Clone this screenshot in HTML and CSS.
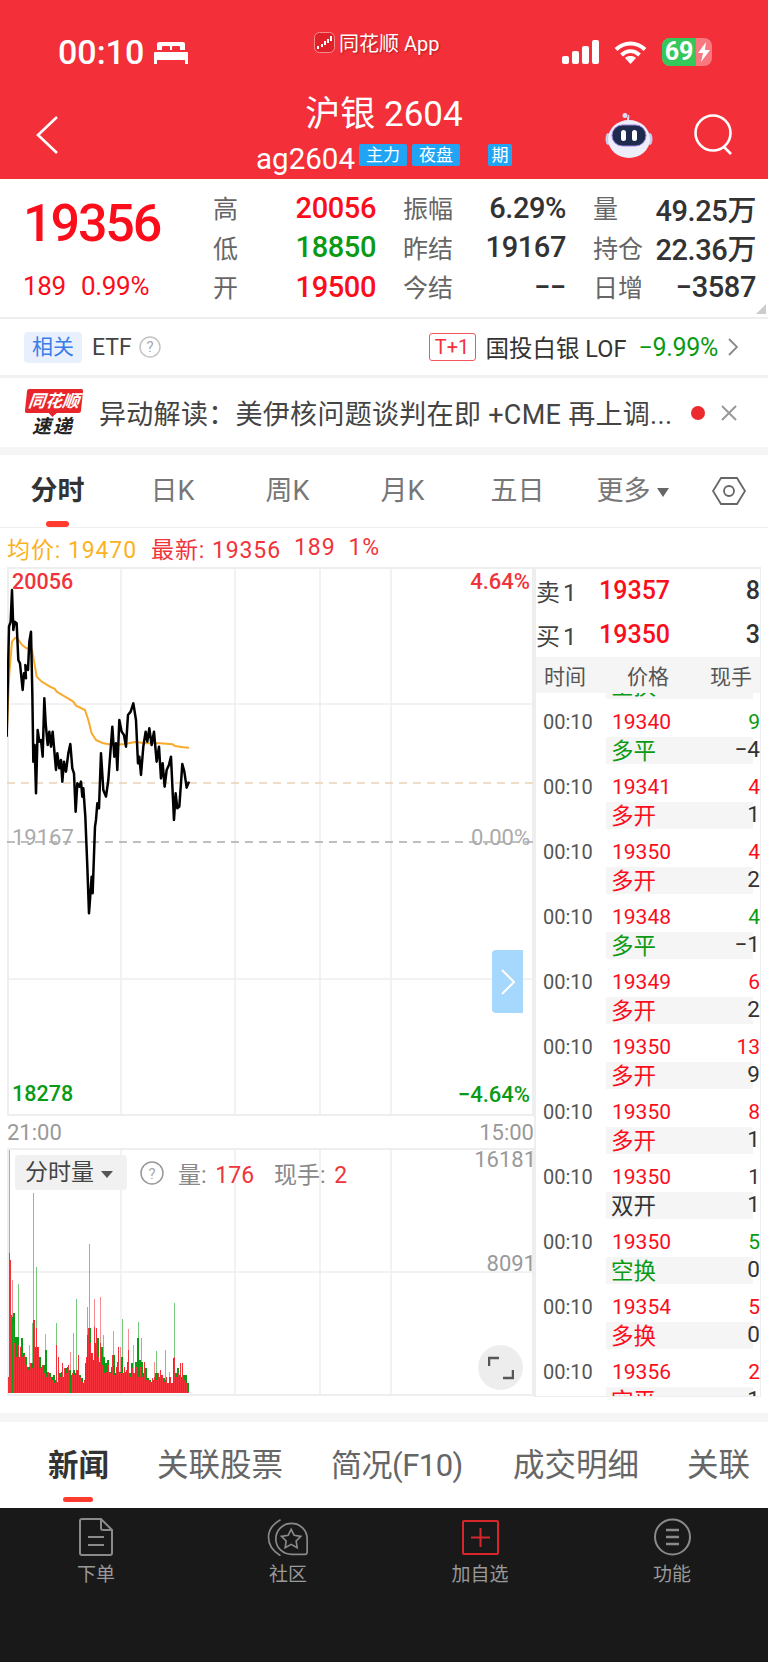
FILE: index.html
```html
<!DOCTYPE html>
<html lang="zh-CN">
<head>
    <meta charset="UTF-8">
    <meta name="viewport" content="width=device-width, initial-scale=1.0">
    <title>沪银2604</title>
    <link rel="stylesheet" href="styles.css">
</head>
<body>
    <!-- 顶部红色区域 -->
    <div class="header">
        <div class="status">
            <div class="status-left">
                <span class="clock">00:10</span>
                <svg width="34" height="23" viewBox="0 0 34 23"><path fill="#fff" d="M5 1h24a2 2 0 0 1 2 2v6h-5V6a1 1 0 0 0-1-1h-6a1 1 0 0 0-1 1v3h-2V6a1 1 0 0 0-1-1H9a1 1 0 0 0-1 1v3H3V3a2 2 0 0 1 2-2zM1 11h32a1 1 0 0 1 1 1v11h-3v-4H3v4H0V12a1 1 0 0 1 1-1z"/></svg>
            </div>
            <div class="status-app">
                <svg width="21" height="21" viewBox="0 0 21 21"><rect x=".5" y=".5" width="20" height="20" rx="5" fill="#e0212a" stroke="#f58a8e"/><path fill="#fff" d="M3 14h2v3H3zM7 12h2v3H7zM10 9h2v4h-2zM13 7h2v4h-2zM16 4h2v5h-2z"/></svg>
                <span>同花顺 App</span>
            </div>
            <div class="status-right">
                <svg width="37" height="24" viewBox="0 0 37 24" fill="#fff"><rect y="16" width="7" height="8" rx="2"/><rect x="10" y="11" width="7" height="13" rx="2"/><rect x="20" y="6" width="7" height="18" rx="2"/><rect x="30" width="7" height="24" rx="2"/></svg>
                <svg width="33" height="24" viewBox="0 0 33 24"><path fill="none" stroke="#fff" stroke-width="4" d="M2 9.5c8.500-8 20.500-8 29 0M7.500 15c5.500-5 12.500-5 18 0"/><path fill="#fff" d="M16.500 24l-5.500-6c3-2.600 8-2.600 11 0z"/></svg>
                <div class="battery">
                    <span class="battery-num">69</span>
                    <svg width="12" height="20" viewBox="0 0 12 20"><path fill="#fff" d="M8 0L0 11h5l-2 9 9-12H7z"/></svg>
                </div>
            </div>
        </div>
        <div class="nav">
            <svg class="back" width="24" height="40" viewBox="0 0 24 40"><path fill="none" stroke="#fff" stroke-width="2.600" d="M22 2L3 20l19 18"/></svg>
            <div class="title-box">
                <div class="title">沪银 2604</div>
                <div class="sub">
                    <span class="code">ag2604</span>
                    <span class="badge">主力</span>
                    <span class="badge">夜盘</span>
                    <span class="badge badge-qi">期</span>
                </div>
            </div>
            <div class="nav-right">
                <svg width="48" height="46" viewBox="0 0 48 46">
                    <path fill="none" stroke="#dcdcf5" stroke-width="2" d="M23 8c0-3 1-4 0-4"/>
                    <circle cx="20" cy="3.500" r="2.500" fill="#dcdcf5"/>
                    <ellipse cx="3" cy="27" rx="2.500" ry="6" fill="#c9cbec"/>
                    <ellipse cx="45" cy="27" rx="2.500" ry="6" fill="#c9cbec"/>
                    <ellipse cx="24" cy="27" rx="21" ry="19" fill="#eceefa"/>
                    <rect x="7" y="13" width="34" height="21" rx="10.500" fill="#1f2b4d" stroke="#9a7fe0"/>
                    <rect x="16" y="18" width="5" height="11" rx="2.500" fill="#fff"/>
                    <rect x="27" y="18" width="5" height="11" rx="2.500" fill="#fff"/>
                </svg>
                <svg class="search" width="40" height="42" viewBox="0 0 40 42"><circle cx="19" cy="19" r="17.500" fill="none" stroke="#fff" stroke-width="2.600"/><path stroke="#fff" stroke-width="2.600" d="M30 33l7 7"/></svg>
            </div>
        </div>
    </div>

    <!-- 行情 -->
    <div class="quote">
        <div class="quote-left">
            <div class="price">19356</div>
            <div class="change"><span>189</span><span>0.99%</span></div>
        </div>
        <div class="quote-grid">
            <div class="cell"><span class="lab">高</span><span class="num red">20056</span></div>
            <div class="cell"><span class="lab">振幅</span><span class="num">6.29%</span></div>
            <div class="cell"><span class="lab">量</span><span class="num">49.25万</span></div>
            <div class="cell"><span class="lab">低</span><span class="num green">18850</span></div>
            <div class="cell"><span class="lab">昨结</span><span class="num">19167</span></div>
            <div class="cell"><span class="lab">持仓</span><span class="num">22.36万</span></div>
            <div class="cell"><span class="lab">开</span><span class="num red">19500</span></div>
            <div class="cell"><span class="lab">今结</span><span class="num">−−</span></div>
            <div class="cell"><span class="lab">日增</span><span class="num">−3587</span></div>
        </div>
        <span class="corner"></span>
    </div>

    <!-- 相关ETF -->
    <div class="related">
        <span class="rel-tag">相关</span>
        <span class="rel-etf">ETF</span>
        <svg width="22" height="22" viewBox="0 0 22 22"><circle cx="11" cy="11" r="10" fill="none" stroke="#c4c4c4" stroke-width="1.500"/><text x="11" y="16" text-anchor="middle" class="help-q">?</text></svg>
        <span class="rel-t1">T+1</span>
        <span class="rel-name">国投白银 LOF</span>
        <span class="rel-pct">−9.99%</span>
        <svg width="10" height="18" viewBox="0 0 10 18"><path fill="none" stroke="#888" stroke-width="1.800" d="M1 1l8 8-8 8"/></svg>
    </div>

    <!-- 异动 -->
    <div class="news">
        <div class="news-logo">
            <div class="logo-red">同花顺</div>
            <div class="logo-black">速递</div>
        </div>
        <div class="news-text">异动解读：美伊核问题谈判在即 +CME 再上调...</div>
        <span class="news-dot"></span>
        <svg width="16" height="16" viewBox="0 0 16 16"><path stroke="#999" stroke-width="2" d="M1 1l14 14M15 1L1 15"/></svg>
    </div>

    <!-- K线切换 -->
    <div class="tabs">
        <div class="tab on">分时</div>
        <div class="tab">日K</div>
        <div class="tab">周K</div>
        <div class="tab">月K</div>
        <div class="tab">五日</div>
        <div class="tab">更多<i class="tri"></i></div>
        <svg width="34" height="30" viewBox="0 0 34 30"><path fill="none" stroke="#666" stroke-width="1.800" d="M9 2h16l8 13-8 13H9L1 15z"/><circle cx="17" cy="15" r="5" fill="none" stroke="#666" stroke-width="1.800"/></svg>
    </div>

    <div class="legend">
        <span class="orange">均价: 19470</span>
        <span class="legend-new">最新: 19356</span>
        <span class="legend-chg">189</span>
        <span class="legend-chg">1%</span>
    </div>

    <div class="main">
        <div class="left">
            <div class="chart">
                <svg width="527" height="549" viewBox="0 0 527 549">
                    <rect x="1" y="1" width="525" height="547" fill="none" stroke="#eee" stroke-width="2"/>
                    <path stroke="#eee" stroke-width="1.500" d="M114 0V549M228 0V549M313 0V549M384 0V549M0 137H527M0 412H527"/>
                    <path stroke="#e8d3b3" stroke-width="1.500" stroke-dasharray="8 6" d="M0 216H527"/>
                    <path stroke="#aaa" stroke-width="1.500" stroke-dasharray="8 6" d="M0 275H527"/>
                    <g transform="translate(-7,-7) scale(.3333)" fill="none" stroke-linejoin="round">
                        <polyline stroke="#f9a92b" stroke-width="6" points="20,530 28,340 36,245 46,233 56,240 66,255 80,265 96,270 105,320 110,350 125,365 150,380 165,387 170,395 195,410 220,425 228,437 255,450 265,480 275,520 288,540 310,550 340,555 375,552 405,546 440,550 480,550 518,553 525,558 550,562 567,563"/>
                        <polyline stroke="#000" stroke-width="7.500" points="20,530 27,200 32,185 36,90 40,210 44,185 50,190 55,300 60,310 68,390 72,340 78,355 76,315 84,330 88,245 93,215 97,400 100,605 104,555 108,700 113,510 118,545 123,540 128,590 133,415 137,490 143,555 148,515 153,560 158,515 168,630 172,580 178,625 183,600 187,665 192,605 198,635 205,580 211,552 217,625 222,640 227,755 232,670 238,680 243,665 247,710 250,685 256,770 262,920 267,1060 275,950 278,1000 285,800 288,780 292,730 297,745 303,580 310,690 318,710 325,660 337,500 343,590 348,550 352,630 358,480 365,515 372,525 378,560 384,465 392,455 400,430 408,480 414,610 418,590 423,645 430,560 437,515 442,545 448,505 455,555 462,515 470,605 477,560 483,655 488,610 494,680 500,630 507,615 513,590 522,780 527,700 532,745 538,740 547,612 553,635 560,683 567,665"/>
                    </g>
                </svg>
                <span class="chart-lab lab-high">20056</span>
                <span class="chart-lab lab-hpct">4.64%</span>
                <span class="chart-lab lab-mid">19167</span>
                <span class="chart-lab lab-mpct">0.00%</span>
                <span class="chart-lab lab-low">18278</span>
                <span class="chart-lab lab-lpct">−4.64%</span>
                <div class="side-btn">
                    <svg width="14" height="26" viewBox="0 0 14 26"><path fill="none" stroke="#fff" stroke-width="2" d="M1 1l12 12L1 25"/></svg>
                </div>
            </div>
            <div class="times"><span>21:00</span><span>15:00</span></div>
            <div class="vol">
                <svg width="527" height="249" viewBox="0 0 527 249">
                    <rect x="1" y="1" width="525" height="246" fill="none" stroke="#eee" stroke-width="2"/>
                    <path stroke="#eee" stroke-width="1.500" d="M114 0V248M228 0V248M313 0V248M384 0V248M0 124H527"/>
                    <g transform="translate(-7,-58) scale(.3333)" fill="none" stroke-width="3" shape-rendering="crispEdges">
                        <path stroke="#0a9a14" stroke-opacity=".55" d="M56 583V908M102 308V908M110 530V908M98 700V908M170 700V908M222 730V908M230 627V908M264 650V908M270 462V908M312 735V908M368 687V908M416 695V908M425 743V908M471 783V908M497 780V908M525 640V908"/>
                        <path stroke="#f4303a" stroke-opacity=".55" d="M28 180V908M39 570V908M90 765V908M136 733V908M212 785V908M285 628V908M303 622V908M340 722V908M361 770V908M386 717V908M401 765V908M465 815V908M510 845V908"/>
                        <path stroke="#0a9a14" stroke-width="4" d="M36 680V908M42 670V908M48 740V908M54 740V908M60 800V908M66 745V908M72 790V908M78 800V908M84 830V908M90 830V908M96 820V908M102 690V908M108 770V908M114 770V908M120 800V908M126 830V908M132 825V908M138 780V908M144 845V908M150 850V908M156 860V908M162 855V908M168 870V908M174 875V908M180 850V908M186 845V908M192 860V908M198 835V908M204 830V908M210 840V908M216 855V908M222 840V908M228 850V908M234 840V908M240 855V908M246 865V908M252 880V908M258 820V908M264 735V908M270 715V908M276 790V908M282 810V908M288 760V908M294 745V908M300 815V908M306 770V908M312 800V908M318 820V908M324 810V908M330 845V908M336 830V908M342 795V908M348 850V908M354 815V908M360 845V908M366 800V908M372 850V908M378 845V908M384 815V908M390 850V908M396 820V908M402 850V908M408 815V908M414 745V908M420 810V908M426 815V908M432 850V908M438 835V908M444 865V908M450 870V908M456 875V908M462 870V908M468 850V908M474 850V908M480 860V908M486 855V908M492 865V908M498 870V908M504 880V908M510 860V908M516 880V908M522 805V908M528 850V908M534 835V908M540 855V908M546 860V908M552 855V908M558 855V908M564 880V908"/>
                        <path stroke="#f4303a" d="M27 860V908M30 490V908M33 510V908M36 675V908M42 700V908M45 760V908M51 800V908M57 765V908M63 770V908M69 800V908M75 795V908M81 825V908M87 840V908M93 820V908M99 835V908M105 690V908M111 715V908M117 770V908M123 835V908M129 825V908M135 850V908M141 860V908M147 845V908M153 860V908M159 870V908M165 880V908M171 765V908M177 800V908M183 860V908M189 820V908M195 835V908M201 850V908M207 825V908M219 850V908M225 855V908M231 840V908M237 795V908M243 860V908M249 875V908M255 870V908M261 800V908M267 715V908M273 760V908M279 790V908M285 710V908M291 715V908M297 800V908M303 760V908M309 825V908M315 850V908M321 845V908M327 825V908M333 850V908M339 795V908M345 855V908M351 830V908M357 770V908M363 850V908M369 850V908M375 830V908M381 840V908M387 780V908M393 860V908M399 835V908M405 850V908M411 830V908M417 860V908M423 830V908M429 860V908M435 815V908M441 870V908M447 870V908M453 875V908M459 865V908M465 860V908M471 870V908M477 850V908M483 840V908M489 855V908M495 875V908M501 860V908M507 880V908M513 860V908M519 880V908M525 800V908M531 860V908M537 850V908M543 820V908M549 820V908M555 870V908M561 880V908M567 905V908"/>
                    </g>
                </svg>
                <div class="vol-bar">
                    <span class="vol-tag">分时量<i class="tri tri-dark"></i></span>
                    <svg width="24" height="24" viewBox="0 0 24 24"><circle cx="12" cy="12" r="11" fill="none" stroke="#999" stroke-width="1.500"/><text x="12" y="17.500" text-anchor="middle" class="help-q">?</text></svg>
                    <span class="vol-txt">量: <b>176</b></span>
                    <span class="vol-txt vol-hand">现手: <b>2</b></span>
                </div>
                <span class="vol-max">16181</span>
                <span class="vol-half">8091</span>
                <div class="expand">
                    <svg width="26" height="24" viewBox="0 0 26 24"><path fill="none" stroke="#555" stroke-width="2.500" d="M1 10V2h10M25 14v8H15"/></svg>
                </div>
            </div>
        </div>

        <!-- 盘口和明细 -->
        <div class="right">
            <div class="book">
                <span class="book-lab">卖1</span><span class="book-price">19357</span><span class="book-num">8</span>
            </div>
            <div class="book">
                <span class="book-lab">买1</span><span class="book-price">19350</span><span class="book-num">3</span>
            </div>
            <div class="list-head"><span>时间</span><span>价格</span><span>现手</span></div>
            <div class="list">
                <div class="tick tick-cut"><div class="t-body"><div class="t-bot"><span class="green">空换</span><span>5</span></div></div></div>
                <div class="tick"><span class="t-time">00:10</span><div class="t-body"><div class="t-top"><span class="red">19340</span><span class="green">9</span></div><div class="t-bot"><span class="green">多平</span><span>−4</span></div></div></div>
                <div class="tick"><span class="t-time">00:10</span><div class="t-body"><div class="t-top"><span class="red">19341</span><span class="red">4</span></div><div class="t-bot"><span class="red">多开</span><span>1</span></div></div></div>
                <div class="tick"><span class="t-time">00:10</span><div class="t-body"><div class="t-top"><span class="red">19350</span><span class="red">4</span></div><div class="t-bot"><span class="red">多开</span><span>2</span></div></div></div>
                <div class="tick"><span class="t-time">00:10</span><div class="t-body"><div class="t-top"><span class="red">19348</span><span class="green">4</span></div><div class="t-bot"><span class="green">多平</span><span>−1</span></div></div></div>
                <div class="tick"><span class="t-time">00:10</span><div class="t-body"><div class="t-top"><span class="red">19349</span><span class="red">6</span></div><div class="t-bot"><span class="red">多开</span><span>2</span></div></div></div>
                <div class="tick"><span class="t-time">00:10</span><div class="t-body"><div class="t-top"><span class="red">19350</span><span class="red">13</span></div><div class="t-bot"><span class="red">多开</span><span>9</span></div></div></div>
                <div class="tick"><span class="t-time">00:10</span><div class="t-body"><div class="t-top"><span class="red">19350</span><span class="red">8</span></div><div class="t-bot"><span class="red">多开</span><span>1</span></div></div></div>
                <div class="tick"><span class="t-time">00:10</span><div class="t-body"><div class="t-top"><span class="red">19350</span><span>1</span></div><div class="t-bot"><span>双开</span><span>1</span></div></div></div>
                <div class="tick"><span class="t-time">00:10</span><div class="t-body"><div class="t-top"><span class="red">19350</span><span class="green">5</span></div><div class="t-bot"><span class="green">空换</span><span>0</span></div></div></div>
                <div class="tick"><span class="t-time">00:10</span><div class="t-body"><div class="t-top"><span class="red">19354</span><span class="red">5</span></div><div class="t-bot"><span class="red">多换</span><span>0</span></div></div></div>
                <div class="tick"><span class="t-time">00:10</span><div class="t-body"><div class="t-top"><span class="red">19356</span><span class="red">2</span></div><div class="t-bot"><span class="red">空平</span><span>1</span></div></div></div>
            </div>
        </div>
    </div>

    <!-- 底部资讯tab -->
    <div class="info-tabs">
        <div class="info-tab on">新闻</div>
        <div class="info-tab">关联股票</div>
        <div class="info-tab info-f10">简况(F10)</div>
        <div class="info-tab">成交明细</div>
        <div class="info-tab">关联</div>
    </div>

    <!-- 底部导航 -->
    <div class="bottom">
        <div class="bottom-item">
            <svg width="36" height="38" viewBox="0 0 36 38" fill="none" stroke="#8a8a8a" stroke-width="2"><path d="M2 3a2 2 0 0 1 2-2h19l11 11v23a2 2 0 0 1-2 2H4a2 2 0 0 1-2-2z"/><path d="M23 1v9a2 2 0 0 0 2 2h9M10 19h16M10 27h16"/></svg>
            <span>下单</span>
        </div>
        <div class="bottom-item">
            <svg width="42" height="38" viewBox="52 22 125 114" fill="none" stroke="#8a8a8a" stroke-width="5"><path d="M92 27C65 42 56 60 56 80s10 40 36 55"/><path d="M78 85a47 47 0 0 1 94 0v40a6 6 0 0 1-6 6h-40c-27 0-48-20-48-46z"/><path d="M124 56l9 18 20 3-14 14 3 20-18-10-18 10 3-20-14-14 20-3z"/></svg>
            <span>社区</span>
        </div>
        <div class="bottom-item">
            <svg width="38" height="38" viewBox="0 0 38 38" fill="none" stroke="#d8272c" stroke-width="2"><rect x="2" y="3" width="35" height="33" rx="1"/><path d="M19.500 10v19M10 19.500h19"/></svg>
            <span>加自选</span>
        </div>
        <div class="bottom-item">
            <svg width="37" height="38" viewBox="0 0 37 38" fill="none" stroke="#8a8a8a" stroke-width="2"><ellipse cx="18.500" cy="19" rx="17.500" ry="17.500"/><path stroke-width="2.500" d="M12 12h13M12 19h13M12 26h13"/></svg>
            <span>功能</span>
        </div>
    </div>
</body>
</html>
```

FILE: styles.css
```css
* {
    box-sizing: border-box;
}
body {
    margin: 0;
    width: 768px;
    background: #fff;
    color: #333;
    font-family: Roboto, "Noto Sans CJK SC", sans-serif;
    overflow-x: hidden;
}
.red { color: #fb0d1b; }
.green { color: #0a9a14; }
.orange { color: #fbb21f; }

/* 顶部 */
.header {
    height: 179px;
    background: #f33039;
    color: #fff;
}
.status {
    height: 80px;
    padding: 24px 56px 0 58px;
    display: flex;
    align-items: center;
}
.status-left {
    width: 256px;
    display: flex;
    align-items: center;
    gap: 10px;
}
.clock {
    font-size: 34px;
    font-weight: 500;
}
.status-app {
    margin-top: -19px;
    display: flex;
    align-items: center;
    gap: 4px;
    font-size: 20px;
    text-shadow: 1px 1px 2px rgba(120,0,0,0.5);
}
.status-right {
    margin-left: auto;
    display: flex;
    align-items: center;
    gap: 15px;
}
.battery {
    width: 50px;
    height: 28px;
    border-radius: 8px;
    overflow: hidden;
    background: rgba(255,255,255,0.35);
    display: flex;
    align-items: center;
}
.battery-num {
    width: 34px;
    height: 28px;
    background: #35c759;
    font-size: 25px;
    font-weight: 700;
    line-height: 28px;
    text-align: center;
    flex: none;
}
.battery svg {
    margin-left: 2px;
}
.nav {
    height: 99px;
    padding: 10px 35px 0 35px;
    display: grid;
    grid-template-columns: 1fr auto 1fr;
    align-items: center;
}
.title-box {
    align-self: start;
    margin-top: 5px;
    text-align: center;
}
.title {
    font-size: 35px;
    line-height: 40px;
}
.sub {
    margin-top: 8px;
    height: 30px;
    display: flex;
    align-items: center;
}
.code {
    font-size: 29.5px;
    margin-top: 2px;
    margin-right: 1px;
}
.badge {
    width: 48px;
    height: 22px;
    margin-left: 3px;
    border-radius: 2px;
    background: #22a4f5;
    font-size: 17px;
    line-height: 22px;
    text-align: center;
    margin-top: -6px;
}
.badge + .badge {
    margin-left: 5px;
}
.badge-qi {
    width: 24px;
    margin-left: 28px !important;
}
.nav-right {
    display: flex;
    align-items: center;
    justify-content: flex-end;
    gap: 41px;
}
.search {
    margin-right: -1px;
}

/* 行情 */
.quote {
    position: relative;
    height: 140px;
    padding-left: 23px;
    border-bottom: 2px solid #eee;
    display: flex;
}
.quote-left {
    width: 190px;
}
.price {
    margin-top: 15px;
    font-size: 52px;
    font-weight: 500;
    line-height: 60px;
    letter-spacing: -2.1px;
    color: #fb0d1b;
}
.change {
    margin-top: 16px;
    display: flex;
    gap: 15px;
    font-size: 26px;
    line-height: 32px;
    letter-spacing: -0.3px;
    color: #fb0d1b;
}
.quote-grid {
    padding-top: 9px;
    display: grid;
    grid-template-columns: repeat(3, 163px);
    grid-auto-rows: 39.5px;
    column-gap: 27px;
}
.cell {
    display: flex;
    align-items: center;
    justify-content: space-between;
}
.lab {
    font-size: 25px;
    color: #666;
    margin-top: -1px;
}
.num {
    font-size: 29px;
    font-weight: 500;
    letter-spacing: -0.4px;
}
.corner {
    position: absolute;
    right: 2px;
    bottom: 3px;
    width: 10px;
    height: 10px;
    background: #ccc;
    clip-path: polygon(100% 0, 100% 100%, 0 100%);
}

/* 相关ETF */
.related {
    height: 59px;
    padding: 0 30px 0 24px;
    border-bottom: 3px solid #f2f2f2;
    display: flex;
    align-items: center;
}
.rel-tag {
    width: 58px;
    height: 31px;
    border-radius: 4px;
    background: #e8f0fe;
    color: #3a7de8;
    font-size: 21px;
    line-height: 31px;
    text-align: center;
}
.rel-etf {
    margin: 0 7px 0 10px;
    font-size: 23px;
    color: #444;
}
.help-q {
    font-size: 15px;
    fill: #aaa;
}
.rel-t1 {
    margin-left: auto;
    width: 47px;
    height: 28px;
    border: 1px solid #f4575e;
    border-radius: 3px;
    color: #f33039;
    font-size: 20px;
    line-height: 26px;
    text-align: center;
}
.rel-name {
    margin-left: 10px;
    font-size: 23.5px;
    color: #333;
}
.rel-pct {
    margin: 0 10px 0 12px;
    font-size: 25px;
    letter-spacing: -0.3px;
    color: #0a9a14;
}

/* 异动 */
.news {
    height: 77px;
    padding: 0 31px 0 26px;
    border-bottom: 8px solid #f5f5f5;
    display: flex;
    align-items: center;
}
.news-logo {
    width: 73px;
    flex: none;
}
.logo-red {
    position: relative;
    width: 56px;
    height: 24px;
    background: #e9252c;
    border-radius: 2px;
    transform: skewX(-6deg);
    color: #fff;
    font-size: 17px;
    font-weight: 700;
    font-style: italic;
    line-height: 24px;
    text-align: center;
}
.logo-red::after {
    content: "";
    position: absolute;
    left: 24px;
    bottom: -4px;
    border: 4px solid transparent;
    border-bottom: 0;
    border-top-color: #e9252c;
}
.logo-black {
    margin: 4px 0 0 6px;
    color: #222;
    font-size: 19px;
    font-weight: 700;
    font-style: italic;
    letter-spacing: 2px;
    line-height: 20px;
}
.news-text {
    flex: 1;
    font-size: 27px;
    white-space: nowrap;
    letter-spacing: 0.3px;
    color: #444;
}
.news-dot {
    width: 14px;
    height: 14px;
    margin-right: 16px;
    border-radius: 50%;
    background: #ec2b2f;
}

/* K线切换 */
.tabs {
    height: 73px;
    border-bottom: 1px solid #eee;
    display: flex;
    align-items: center;
}
.tab {
    position: relative;
    width: 115px;
    font-size: 27px;
    line-height: 74px;
    text-align: center;
    color: #777;
}
.tab.on {
    color: #333;
    font-weight: 700;
}
.tab.on::after {
    content: "";
    position: absolute;
    left: 46px;
    bottom: 1px;
    width: 23px;
    height: 6px;
    border-radius: 3px;
    background: #ff3b30;
}
.tri {
    display: inline-block;
    margin-left: 6px;
    vertical-align: 3px;
    border: 6px solid transparent;
    border-bottom: 0;
    border-top: 9px solid #666;
}
.tabs svg {
    margin-left: 22px;
}
.legend {
    height: 39px;
    padding-left: 7px;
    display: flex;
    align-items: center;
    font-size: 23px;
    letter-spacing: 0.9px;
}
.legend-new {
    margin-left: 14px;
    color: #f0343c;
}
.legend-chg {
    margin-left: 13px;
    color: #f0343c;
}

/* 图表 */
.main {
    display: flex;
    height: 830px;
}
.left {
    width: 534px;
    padding-left: 7px;
    flex: none;
}
.chart {
    position: relative;
    width: 527px;
    height: 549px;
}
.chart svg, .vol > svg {
    display: block;
}
.chart-lab {
    position: absolute;
    font-size: 22px;
    line-height: 26px;
}
.lab-high { left: 5px; top: 2px; color: #f0343c; font-weight: 500; font-size: 21.5px; }
.lab-hpct { right: 4px; top: 2px; color: #f0343c; font-weight: 500; }
.lab-mid { left: 5px; top: 258px; color: #aaa; }
.lab-mpct { right: 4px; top: 258px; color: #aaa; }
.lab-low { left: 5px; top: 514px; color: #0a9a14; font-weight: 500; font-size: 21.5px; }
.lab-lpct { right: 4px; top: 515px; color: #0a9a14; font-weight: 500; }
.side-btn {
    position: absolute;
    left: 485px;
    top: 383px;
    width: 31px;
    height: 63px;
    border-radius: 4px 0 0 4px;
    background: rgba(160,214,252,0.95);
    display: flex;
    align-items: center;
    justify-content: center;
}
.times {
    height: 32px;
    display: flex;
    align-items: center;
    justify-content: space-between;
    font-size: 22px;
    color: #999;
}
.vol {
    position: relative;
    width: 527px;
    height: 249px;
}
.vol-bar {
    position: absolute;
    left: 8px;
    top: 7px;
    display: flex;
    align-items: center;
}
.vol-tag {
    width: 112px;
    height: 35px;
    margin-right: 13px;
    padding-left: 10px;
    border-radius: 4px;
    background: rgba(240,240,240,0.95);
    font-size: 23px;
    line-height: 35px;
    color: #444;
}
.tri-dark {
    margin-left: 7px;
    vertical-align: 2px;
    border-top-color: #555;
    border-left-width: 6px;
    border-right-width: 6px;
    border-top-width: 7px;
}
.vol-txt {
    margin-left: 14px;
    font-size: 23px;
    color: #888;
}
.vol-txt b {
    margin-left: 3px;
    font-weight: 400;
    color: #f0343c;
}
.vol-hand {
    margin-left: 20px;
}
.vol-max, .vol-half {
    position: absolute;
    right: -2px;
    font-size: 22px;
    line-height: 26px;
    color: #999;
}
.vol-max { top: -1px; }
.vol-half { top: 103px; }
.expand {
    position: absolute;
    left: 471px;
    top: 197px;
    width: 45px;
    height: 45px;
    border-radius: 50%;
    background: #ededed;
    display: flex;
    align-items: center;
    justify-content: center;
}

/* 盘口 */
.right {
    width: 227px;
    height: 830px;
    border-top: 2px solid #eee;
    border-right: 1px solid #eee;
    border-left: 2px solid #eee;
    border-bottom: 1px solid #eee;
    overflow: hidden;
    flex: none;
}
.book {
    height: 42px;
    display: flex;
    align-items: center;
    font-size: 24px;
}
.book + .book {
    height: 46px;
}
.book-lab {
    width: 63px;
    letter-spacing: 3px;
    color: #444;
}
.book-price {
    flex: 1;
    font-size: 25px;
    font-weight: 500;
    color: #fb0d1b;
}
.book-num {
    font-size: 25px;
    font-weight: 500;
    color: #333;
}
.list-head {
    height: 36px;
    padding: 0 8px;
    background: #f5f5f5;
    display: flex;
    align-items: center;
    justify-content: space-between;
    font-size: 21px;
    color: #555;
}
.list {
    height: 703px;
    overflow: hidden;
}
.tick {
    height: 65px;
    padding-left: 7px;
    display: flex;
}
.tick-cut {
    height: 15px;
    padding: 0 0 9px 70px;
    align-items: flex-end;
    overflow: hidden;
}
.t-time {
    width: 63px;
    flex: none;
    font-size: 20px;
    line-height: 29px;
    color: #555;
}
.t-body {
    flex: 1;
}
.t-top {
    height: 28px;
    margin-bottom: 1px;
    padding-left: 6px;
    display: flex;
    align-items: center;
    justify-content: space-between;
    font-size: 21px;
}
.t-bot {
    height: 27px;
    padding: 0 0 3px 5px;
    display: flex;
    align-items: center;
    justify-content: space-between;
    background: linear-gradient(#f5f5f5,#f5f5f5) no-repeat;
    background-size: 147px 100%;
    font-size: 22.5px;
}

/* 底部tab */
.info-tabs {
    height: 95px;
    padding-left: 48px;
    border-top: 9px solid #f5f5f5;
    margin-top: 16px;
    display: flex;
    gap: 48px;
    overflow: hidden;
    white-space: nowrap;
}
.info-tab {
    position: relative;
    height: 86px;
    font-size: 31.5px;
    line-height: 88px;
    color: #666;
    flex: none;
}
.info-tab.on {
    font-size: 30.5px;
    color: #333;
    font-weight: 700;
}
.info-tab.on::after {
    content: "";
    position: absolute;
    left: 15px;
    bottom: 6px;
    width: 30px;
    height: 5px;
    border-radius: 3px;
    background: #ff3b30;
}
.info-f10 {
    margin-right: 2px;
    font-size: 31px;
    letter-spacing: -0.5px;
}
.bottom {
    height: 154px;
    padding-top: 10px;
    background: #191919;
    display: flex;
    align-items: flex-start;
}
.bottom-item {
    width: 192px;
    display: flex;
    flex-direction: column;
    align-items: center;
    gap: 7px;
    font-size: 19px;
    line-height: 24px;
    color: #999;
}
```
